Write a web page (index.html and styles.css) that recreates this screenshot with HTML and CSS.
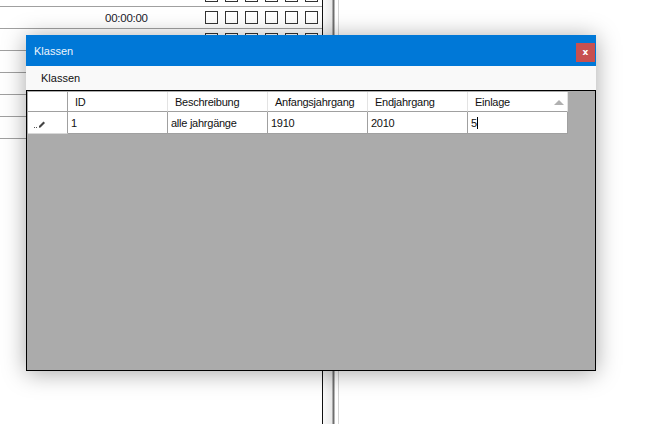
FILE: index.html
```html
<!DOCTYPE html>
<html lang="de">
<head>
<meta charset="utf-8">
<title>Klassen</title>
<link rel="stylesheet" href="styles.css">
</head>
<body>
<div class="desktop">
  <div class="back-panel">
    <div class="back-row">
      <span class="time">00:00:00</span>
      <span class="checks"><i></i><i></i><i></i><i></i><i></i><i></i></span>
    </div>
    <div class="back-row">
      <span class="time">00:00:00</span>
      <span class="checks"><i></i><i></i><i></i><i></i><i></i><i></i></span>
    </div>
    <div class="back-row">
      <span class="time">00:00:00</span>
      <span class="checks"><i></i><i></i><i></i><i></i><i></i><i></i></span>
    </div>
    <div class="back-row"></div>
    <div class="back-row"></div>
    <div class="back-row"></div>
    <div class="back-row"></div>
  </div>
  <div class="splitter"></div>
</div>
<section class="window">
  <header class="titlebar">
    <span class="title">Klassen</span>
    <span class="close">x</span>
  </header>
  <nav class="menubar"><span>Klassen</span></nav>
  <div class="client">
    <div class="grid">
      <div class="cell head corner"></div>
      <div class="cell head col"><span>ID</span></div>
      <div class="cell head col"><span>Beschreibung</span></div>
      <div class="cell head col"><span>Anfangsjahrgang</span></div>
      <div class="cell head col"><span>Endjahrgang</span></div>
      <div class="cell head col sorted"><span>Einlage</span><b class="sort"></b></div>
      <div class="cell rowhead">
        <svg width="12" height="8" viewBox="0 0 12 8"><path class="pencil" d="M5 6 L9.5 1.5 L11 3 L6.5 7.5 L5 7.8Z"/><path class="dots" d="M0 7h1v1H0zM2 7h1v1H2z"/></svg>
      </div>
      <div class="cell data">1</div>
      <div class="cell data">alle jahrgänge</div>
      <div class="cell data">1910</div>
      <div class="cell data">2010</div>
      <div class="cell data"><span class="edit">5</span></div>
    </div>
  </div>
</section>
</body>
</html>
```
FILE: styles.css
```css
html, body {
  margin: 0;
  padding: 0;
  width: 652px;
  height: 424px;
  overflow: hidden;
  background: #fff;
  font-family: "Liberation Sans", Arial, sans-serif;
  font-size: 11px;
  color: #000;
}
.desktop {
  display: flex;
  height: 424px;
}
.back-panel {
  width: 322px;
  height: 439px;
  margin-top: -15px;
  flex: none;
  border-right: 1px solid #111;
}
.back-row {
  height: 21px;
  border-bottom: 1px solid #a0a0a0;
  display: flex;
  align-items: center;
}
.time {
  margin-left: 105px;
  width: 100px;
  padding-top: 1px;
  font-size: 11.5px;
  letter-spacing: -0.25px;
  color: #1a1a2a;
}
.checks {
  display: flex;
  gap: 7px;
}
.checks i {
  display: block;
  width: 11px;
  height: 11px;
  border: 1px solid #333;
  background: #fff;
}
.splitter {
  width: 16px;
  flex: none;
  height: 424px;
  background: linear-gradient(90deg, #fafafa 0, #e9e9e9 9px, #6e6e6e 10px, #6e6e6e 11px, #fff 12px, #fff 15px, #d4d4d4 15px);
}
.window {
  position: absolute;
  left: 26px;
  top: 35px;
  width: 570px;
  height: 336px;
  display: flex;
  flex-direction: column;
  box-shadow: 0 2px 22px rgba(0, 0, 0, 0.35);
}
.titlebar {
  height: 31px;
  flex: none;
  background: #0078d7;
  display: flex;
  align-items: center;
  justify-content: space-between;
  padding-left: 8px;
  padding-right: 1px;
}
.title {
  color: #eef5fc;
}
.close {
  align-self: flex-start;
  width: 19px;
  height: 19px;
  margin-top: 8px;
  background: #c75050;
  color: #fff;
  font: bold 9px/18px "DejaVu Sans", sans-serif;
  text-align: center;
}
.menubar {
  height: 24px;
  flex: none;
  background: #f9f9f9;
  display: flex;
  align-items: center;
  padding-left: 15px;
  color: #111;
}
.client {
  flex: 1;
  background: #ababab;
  border: 1px solid #000;
  padding: 1px 0 0 1px;
}
.grid {
  display: grid;
  grid-template-columns: 40px 100px 100px 100px 100px 100px;
  grid-template-rows: 20px 22px;
  width: 540px;
  background: #fff;
}
.cell {
  box-sizing: border-box;
  border-right: 1px solid #a0a0a0;
  border-bottom: 1px solid #a0a0a0;
  display: flex;
  align-items: center;
  color: #111;
  letter-spacing: -0.25px;
}
.head {
  background: #fff;
  border-right-color: #e3e3e3;
  position: relative;
}
.corner {
  border-right-color: #a0a0a0;
}
.col span {
  padding-left: 7px;
}
.sort {
  position: absolute;
  right: 3px;
  top: 8px;
  width: 0;
  height: 0;
  border-left: 5px solid transparent;
  border-right: 5px solid transparent;
  border-bottom: 5px solid #b0b0b0;
}
.rowhead {
  padding-left: 6px;
  padding-top: 3px;
  border-bottom-color: #d8d8d8;
}
.pencil { fill: #444; }
.dots { fill: #555; }
.data {
  padding-left: 3px;
}
.edit {
  border-right: 1px solid #000;
  line-height: 12px;
  padding-right: 0.5px;
}
```
